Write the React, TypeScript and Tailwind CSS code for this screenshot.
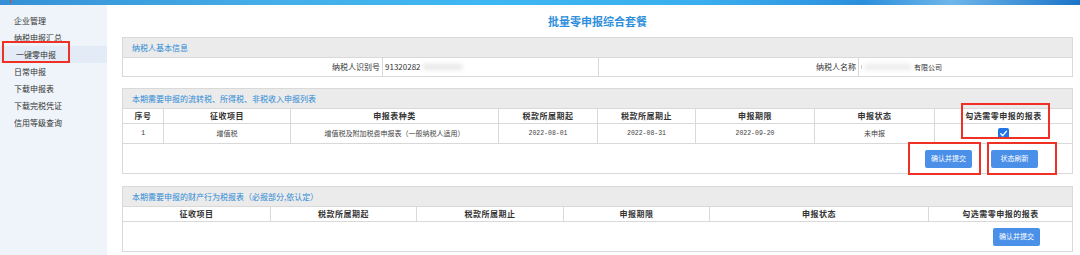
import React from "react";

const cjk = "font-['Noto_Sans_CJK_SC','Noto_Sans',sans-serif]";
const mono = "font-['Liberation_Mono','Noto_Sans_CJK_SC',monospace]";

function SectionHeader({ children }: { children: React.ReactNode }) {
  return (
    <div className="h-[20px] bg-[#ebebeb] border-b border-[#d9d9d9] pl-[9px] flex items-center text-[8px] text-[#2b89d6]">
      {children}
    </div>
  );
}

function Check() {
  return (
    <div className="w-[11px] h-[11px] bg-[#1f74e6] rounded-[2px] flex items-center justify-center">
      <svg width="9" height="9" viewBox="0 0 10 10">
        <path d="M2 5.2 L4.2 7.4 L8.2 2.6" fill="none" stroke="#fff" strokeWidth="1.6" strokeLinecap="round" strokeLinejoin="round" />
      </svg>
    </div>
  );
}

function Btn({ children }: { children: React.ReactNode }) {
  return (
    <div className="w-[47px] h-[18px] bg-[#4a8fe8] rounded-[2px] text-white text-[7px] flex items-center justify-center">
      {children}
    </div>
  );
}

const sideItems = ["企业管理", "纳税申报汇总", "一键零申报", "日常申报", "下载申报表", "下载完税凭证", "信用等级查询"];

export default function App() {
  const t2w = ["w-[40px]", "w-[127px]", "w-[208px]", "w-[99px]", "w-[98px]", "w-[119px]", "w-[120px]", "w-[138px]"];
  const t2h = ["序号", "征收项目", "申报表种类", "税款所属期起", "税款所属期止", "申报期限", "申报状态", "勾选需零申报的报表"];
  const t3w = ["w-[147px]", "w-[146px]", "w-[147px]", "w-[146px]", "w-[219px]", "w-[144px]"];
  const t3h = ["征收项目", "税款所属期起", "税款所属期止", "申报期限", "申报状态", "勾选需零申报的报表"];
  return (
    <div className={`w-[1080px] h-[255px] overflow-hidden bg-white flex flex-col ${cjk}`}>
      <div className="h-[5px] relative bg-[linear-gradient(90deg,#3590d6_0%,#45aee8_25%,#3db7f2_45%,#3aaeee_65%,#2b8fdc_80%,#6fb6ea_88%,#1b74c8_100%)]">
        <div className="absolute left-[10px] top-0 w-[1px] h-[3px] bg-[#e53b2c]" />
      </div>
      <div className="flex flex-1">
        <div className="w-[107px] bg-[#eef4f9] pt-[7px] flex flex-col">
          {sideItems.map((s) => {
            const active = s === "一键零申报";
            return (
              <div
                key={s}
                className={`relative h-[17px] flex items-center text-[8px] text-[#333] ${active ? "bg-[#e3ecf6] pl-[16px]" : "pl-[14px]"}`}
              >
                {s}
                {active && (
                  <div className="absolute left-[2px] top-[-5px] w-[68px] h-[22px] border-2 border-[#ee3124]" />
                )}
              </div>
            );
          })}
        </div>
        <div className="flex-1 pl-[15px] pr-[7px] flex flex-col">
          <div className="h-[32px] flex items-center justify-center text-[11px] font-bold text-[#2f8fdc]">
            批量零申报综合套餐
          </div>

          {/* section 1 */}
          <div className="border border-[#d9d9d9]">
            <SectionHeader>纳税人基本信息</SectionHeader>
            <div className="h-[18px] flex text-[8px] text-[#333]">
              <div className="w-[259px] flex items-center justify-end pr-[2px]">纳税人识别号</div>
              <div className="w-[216px] border-l border-[#d9d9d9] flex items-center pl-[2px]">
                <span className="text-[#333]">91320282</span>
                <span className="ml-[2px] w-[40px] h-[6px] rounded-full bg-[#e8e8e8] blur-[2px]" />
              </div>
              <div className="w-[260px] border-l border-[#d9d9d9] flex items-center justify-end pr-[2px]">纳税人名称</div>
              <div className="w-[214px] border-l border-[#d9d9d9] flex items-center pl-[2px]">
                <span className="w-[1px] h-[4px] bg-[#ccc]" />
                <span className="ml-[2px] w-[48px] h-[6px] rounded-full bg-[#ececec] blur-[2px]" />
                <span className="ml-[2px] text-[7px]">有限公司</span>
              </div>
            </div>
          </div>

          {/* section 2 */}
          <div className="relative mt-[11px] border border-[#d9d9d9]">
            <SectionHeader>本期需要申报的流转税、所得税、非税收入申报列表</SectionHeader>
            <div className="h-[15px] flex border-b border-[#d9d9d9] text-[8px] font-bold text-[#333]">
              {t2h.map((h, i) => (
                <div key={h} className={`${t2w[i]} ${i ? "border-l border-[#d9d9d9]" : ""} flex items-center justify-center tracking-[0.5px]`}>
                  {h}
                </div>
              ))}
            </div>
            <div className="h-[20px] flex border-b border-[#d9d9d9] text-[7px] text-[#444]">
              <div className={`${t2w[0]} flex items-center justify-center ${mono} text-[7px]`}>1</div>
              <div className={`${t2w[1]} border-l border-[#d9d9d9] flex items-center justify-center`}>增值税</div>
              <div className={`${t2w[2]} border-l border-[#d9d9d9] flex items-center justify-center`}>增值税及附加税费申报表（一般纳税人适用）</div>
              <div className={`${t2w[3]} border-l border-[#d9d9d9] flex items-center justify-center ${mono} text-[6.5px]`}>2022-08-01</div>
              <div className={`${t2w[4]} border-l border-[#d9d9d9] flex items-center justify-center ${mono} text-[6.5px]`}>2022-08-31</div>
              <div className={`${t2w[5]} border-l border-[#d9d9d9] flex items-center justify-center ${mono} text-[6.5px]`}>2022-09-20</div>
              <div className={`${t2w[6]} border-l border-[#d9d9d9] flex items-center justify-center`}>未申报</div>
              <div className={`${t2w[7]} border-l border-[#d9d9d9] flex items-center justify-center`}>
                <Check />
              </div>
            </div>
            <div className="h-[29px] flex items-center justify-end gap-[19px] pr-[34px]">
              <Btn>确认并提交</Btn>
              <Btn>状态刷新</Btn>
            </div>
            <div className="absolute left-[838px] top-[14px] w-[89px] h-[36px] border-2 border-[#ee3124]" />
            <div className="absolute left-[785px] top-[53px] w-[73px] h-[33px] border-2 border-[#ee3124]" />
            <div className="absolute left-[864px] top-[53px] w-[70px] h-[33px] border-2 border-[#ee3124]" />
          </div>

          {/* section 3 */}
          <div className="mt-[12px] border border-[#d9d9d9]">
            <SectionHeader>本期需要申报的财产行为税报表（必报部分,依认定）</SectionHeader>
            <div className="h-[15px] flex border-b border-[#d9d9d9] text-[8px] font-bold text-[#333]">
              {t3h.map((h, i) => (
                <div key={h} className={`${t3w[i]} ${i ? "border-l border-[#d9d9d9]" : ""} flex items-center justify-center tracking-[0.5px]`}>
                  {h}
                </div>
              ))}
            </div>
            <div className="h-[29px] flex items-center justify-end pr-[32px]">
              <Btn>确认并提交</Btn>
            </div>
          </div>
        </div>
      </div>
    </div>
  );
}
